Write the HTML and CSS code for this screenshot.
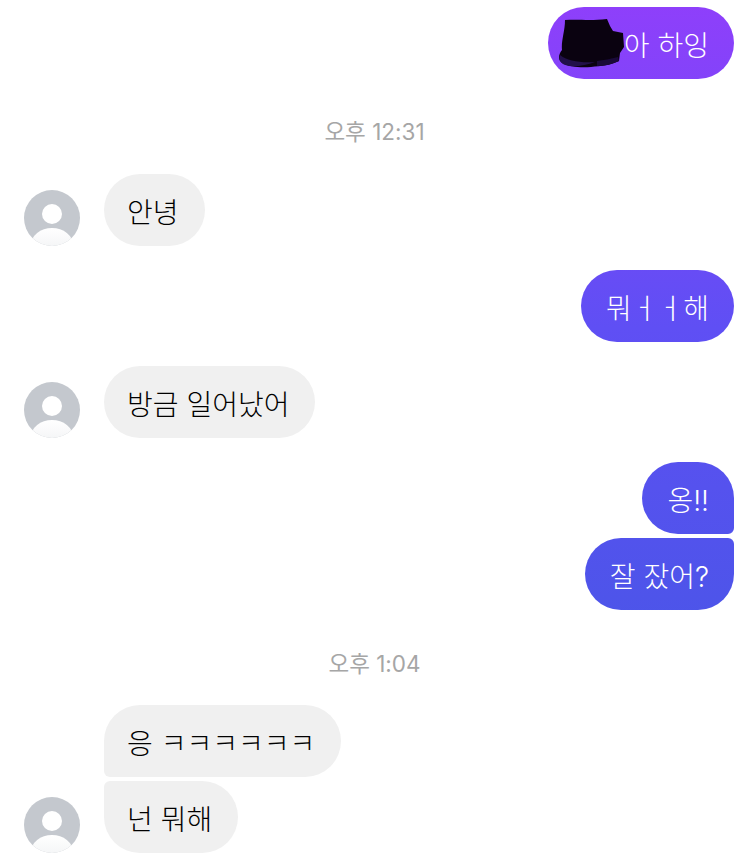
FILE: index.html
```html
<!DOCTYPE html>
<html lang="ko">
<head>
    <meta charset="UTF-8">
    <meta name="viewport" content="width=device-width, initial-scale=1.0">
    <title>채팅</title>
    <link rel="stylesheet" href="styles.css">
</head>
<body>
    <svg class="defs" width="0" height="0">
        <defs>
            <linearGradient id="avatarBody" x1="0" y1="0" x2="0" y2="1">
                <stop offset="0" stop-color="#ffffff"/>
                <stop offset="1" stop-color="#eceef0"/>
            </linearGradient>
            <clipPath id="avatarClip"><circle cx="28" cy="28" r="28"/></clipPath>
            <symbol id="avatar" viewBox="0 0 56 56">
                <circle cx="28" cy="28" r="28" fill="#c4c8ce"/>
                <g clip-path="url(#avatarClip)">
                    <circle cx="28" cy="24" r="10" fill="#fff"/>
                    <ellipse cx="28" cy="55" rx="21" ry="17" fill="url(#avatarBody)"/>
                </g>
            </symbol>
        </defs>
    </svg>

    <main class="chat">
        <div class="msg out">
            <div class="bubble solo">
                <span class="hidden-name"></span>아 하잉
                <svg class="scribble" width="70" height="54" viewBox="0 0 70 54">
                    <path d="M8 3 C22 2 32 4 50 2 L53 9 L56 14 L66 16 L67 30 L63 36 L62 44 C54 48 44 49 34 50 C24 51 12 50 5 46 C1 43 1 38 5 33 C4 24 8 14 8 3 Z" fill="#0a0210"/>
                    <path d="M3 38 C10 44 24 46 38 45 C30 48 20 50 12 49 C8 48 5 47 4 45 C2 43 2 40 3 38 Z" fill="#22104a"/>
                    <path d="M40 44 C46 43 54 42 61 40 L62 44 C56 47 48 49 40 49 Z" fill="#1a0a38"/>
                </svg>
            </div>
        </div>

        <div class="time first">오후 12:31</div>

        <div class="msg in">
            <svg class="avatar"><use href="#avatar"/></svg>
            <div class="bubble solo">안녕</div>
        </div>

        <div class="msg out gap">
            <div class="bubble solo">뭐ㅓㅓ해</div>
        </div>

        <div class="msg in gap">
            <svg class="avatar"><use href="#avatar"/></svg>
            <div class="bubble solo">방금 일어났어</div>
        </div>

        <div class="msg out gap">
            <div class="bubble out-top">옹!!</div>
        </div>
        <div class="msg out joined">
            <div class="bubble out-bottom">잘 잤어?</div>
        </div>

        <div class="time second">오후 1:04</div>

        <div class="msg in">
            <div class="avatar-space"></div>
            <div class="bubble in-top">응 ㅋㅋㅋㅋㅋㅋ</div>
        </div>
        <div class="msg in joined">
            <svg class="avatar"><use href="#avatar"/></svg>
            <div class="bubble in-bottom">넌 뭐해</div>
        </div>
    </main>
</body>
</html>
```

FILE: styles.css
```css
body {
    margin: 0;
    background-color: #fff;
    font-family: "Inter", "Noto Sans CJK KR", sans-serif;
}
.defs {
    position: absolute;
}
.chat {
    display: flex;
    flex-direction: column;
    padding: 7px 15px 10px;
}
.msg {
    display: flex;
    align-items: flex-end;
}
.msg.out {
    justify-content: flex-end;
}
.msg.in {
    padding-left: 9px;
    gap: 24px;
}
.msg.gap {
    margin-top: 24px;
}
.msg.joined {
    margin-top: 4px;
}
.avatar, .avatar-space {
    width: 56px;
    height: 56px;
    flex-shrink: 0;
}
.bubble {
    position: relative;
    height: 72px;
    line-height: 78px;
    font-size: 28px;
    font-weight: 300;
    white-space: nowrap;
    box-sizing: border-box;
}
.in .bubble {
    padding: 0 26px 0 23px;
    background-color: #f0f0f0;
    color: #000;
}
.out .bubble {
    padding: 0 25px;
    background: linear-gradient(180deg, #8f3ffb 0%, #5f4ff4 38%, #4b55e8 75%, #4655e4 100%) fixed;
    color: #fff;
}
.solo {
    border-radius: 36px;
}
.out-top {
    border-radius: 36px 36px 6px 36px;
}
.out-bottom {
    border-radius: 36px 6px 36px 36px;
}
.in-top {
    border-radius: 36px 36px 36px 6px;
}
.in-bottom {
    border-radius: 6px 36px 36px 36px;
}
.hidden-name {
    display: inline-block;
    width: 51px;
}
.scribble {
    position: absolute;
    left: 9px;
    top: 10px;
    filter: blur(0.6px);
}
.time {
    height: 26px;
    line-height: 28px;
    text-align: center;
    font-size: 22.5px;
    color: #a6a6a6;
}
.time.first {
    margin: 39px 0 30px;
}
.time.second {
    margin: 40px 0 29px;
}
```
